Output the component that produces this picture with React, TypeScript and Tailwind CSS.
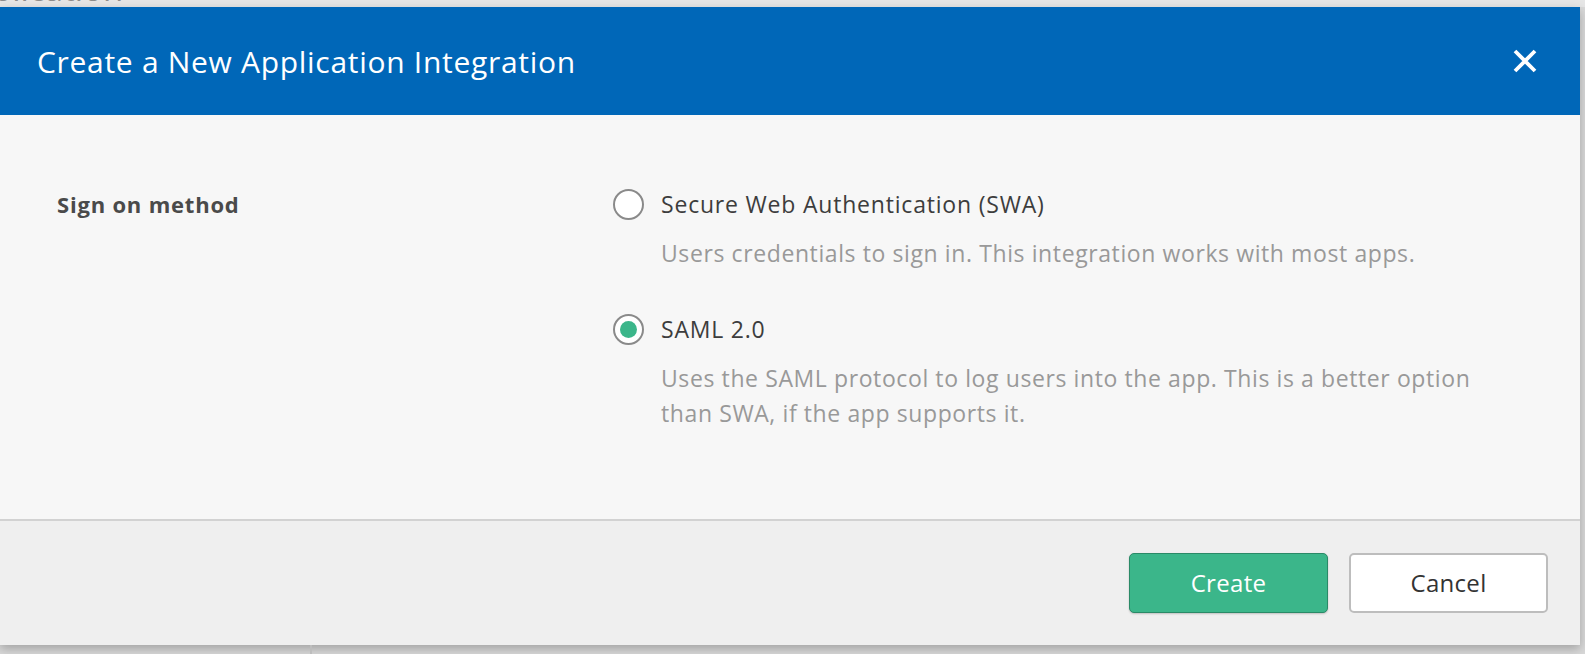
const font = { fontFamily: "'Open Sans', Lato, sans-serif" };

function Radio({ checked }: { checked?: boolean }) {
  return (
    <span className="flex h-[31px] w-[31px] shrink-0 items-center justify-center rounded-full border-2 border-[#8a8a8a] bg-white">
      {checked && <span className="h-[17px] w-[17px] rounded-full bg-[#3bb68a]" />}
    </span>
  );
}

function Option({
  label,
  desc,
  checked,
}: {
  label: string;
  desc: string;
  checked?: boolean;
}) {
  return (
    <div className="flex gap-[17px]">
      <Radio checked={checked} />
      <div className="flex flex-col">
        <div className="text-[23px] leading-[31px] tracking-[0.8px] text-[#3d3d3d]">{label}</div>
        <div className="mt-[16px] w-[840px] text-[23px] leading-[35px] tracking-[0.6px] text-[#999999]">{desc}</div>
      </div>
    </div>
  );
}

function CloseIcon() {
  return (
    <svg width="24" height="24" viewBox="0 0 24 24" className="shrink-0">
      <path d="M2 2 L22 22 M22 2 L2 22" stroke="white" strokeWidth="3.8" strokeLinecap="butt" />
    </svg>
  );
}

export default function App() {
  return (
    <div className="h-[654px] w-[1585px] overflow-hidden bg-[#d9d9d9]" style={font}>
      <div className="h-[7px] overflow-hidden bg-[#e6e6e6]">
        <div className="-ml-[8px] -mt-[27px] text-[33px] leading-[32px] text-[#8c8c8c]">plication</div>
      </div>
      <div className="w-[1580px] shadow-[0_4px_10px_rgba(0,0,0,0.25)]">
        <div className="flex h-[108px] items-center justify-between bg-[#0067b8] pl-[37px] pr-[43px]">
          <h1 className="text-[30px] font-normal tracking-[0.7px] text-white">Create a New Application Integration</h1>
          <CloseIcon />
        </div>
        <div className="flex h-[404px] bg-[#f7f7f7] pt-[74px]">
          <div className="w-[613px] pl-[57px] pt-[1px] text-[22px] font-bold leading-[28px] tracking-[0.8px] text-[#4a4a4a]">
            Sign on method
          </div>
          <div className="flex flex-col gap-[43px]">
            <Option
              label="Secure Web Authentication (SWA)"
              desc="Users credentials to sign in. This integration works with most apps."
            />
            <Option
              checked
              label="SAML 2.0"
              desc="Uses the SAML protocol to log users into the app. This is a better option than SWA, if the app supports it."
            />
          </div>
        </div>
        <div className="flex h-[126px] items-center justify-end gap-[21px] border-t-2 border-[#d2d2d2] bg-[#efefef] pr-[32px]">
          <button className="h-[60px] w-[199px] rounded-[5px] border border-[#2a8a67] bg-[#3bb68a] text-[24px] tracking-[0.3px] text-white shadow-[0_1px_2px_rgba(0,0,0,0.2)]">
            Create
          </button>
          <button className="h-[60px] w-[199px] rounded-[5px] border-2 border-[#bdbdbd] bg-white text-[24px] tracking-[0.3px] text-[#333333]">
            Cancel
          </button>
        </div>
      </div>
      <div className="flex h-[9px]">
        <div className="w-[310px]" />
        <div className="w-[2px] bg-[#bdbdbd]" />
      </div>
    </div>
  );
}
